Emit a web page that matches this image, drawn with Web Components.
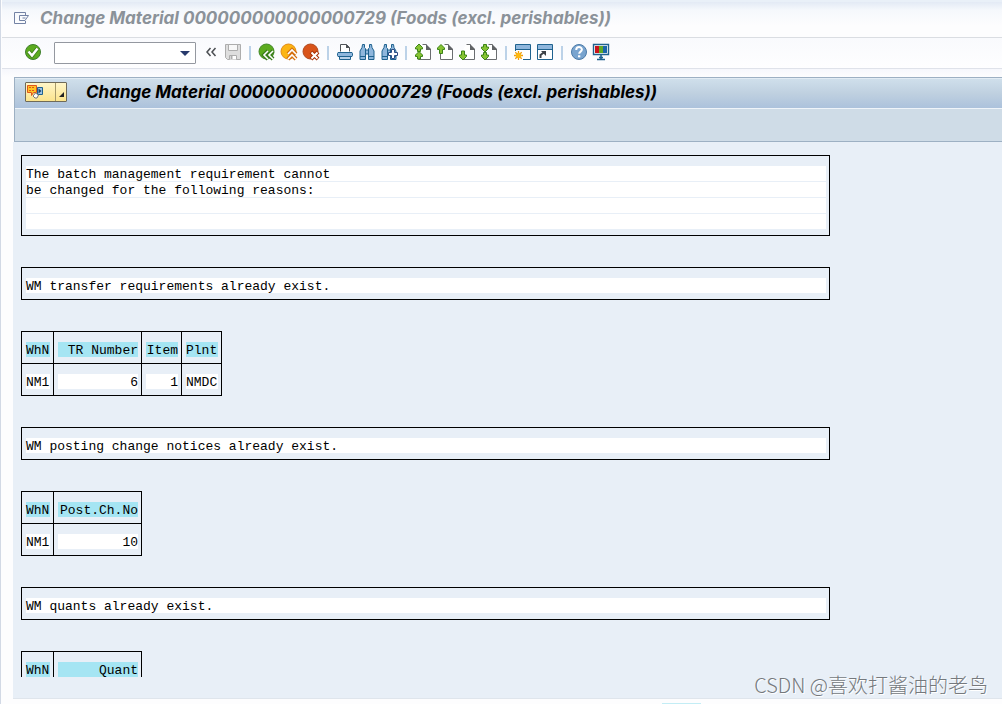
<!DOCTYPE html>
<html lang="en">
<head>
<meta charset="utf-8">
<title>Change Material</title>
<style>
  html, body { margin: 0; height: 100%; background: #fdfdfe; }
  body { overflow: hidden; }
</style>
</head>
<body>
<sap-window>
  <title-bar slot="title">Change Material 000000000000000729 (Foods (excl. perishables))</title-bar>
  <system-toolbar slot="toolbar"></system-toolbar>
  <app-panel>
    <app-header slot="header">Change Material 000000000000000729 (Foods (excl. perishables))</app-header>
    <list-box lines="4">The batch management requirement cannot|be changed for the following reasons:</list-box>
    <list-box lines="1">WM transfer requirements already exist.</list-box>
    <list-table columns="WhN:24:l,TR Number:80:r,Item:32:r,Plnt:32:l" rows="NM1,6,1,NMDC"></list-table>
    <list-box lines="1">WM posting change notices already exist.</list-box>
    <list-table columns="WhN:24:l,Post.Ch.No:80:r" rows="NM1,10"></list-table>
    <list-box lines="1">WM quants already exist.</list-box>
    <list-table columns="WhN:24:l,Quant:80:r" rows=""></list-table>
  </app-panel>
  <water-mark slot="mark">CSDN @喜欢打酱油的老鸟</water-mark>
</sap-window>

<script>
const define = (name, html, setup) => {
  const template = document.createElement('template');
  template.innerHTML = html;
  customElements.define(name, class extends HTMLElement {
    connectedCallback() {
      if (this.shadowRoot) return;
      this.attachShadow({ mode: 'open' }).append(template.content.cloneNode(true));
      if (setup) setup(this, this.shadowRoot);
    }
  });
};

const page = (arrows) => `
  <path d="M8 1.500h4l4.500 4.500v10.500h-12V8z" fill="#fff"/>
  <path d="M8.500 1.500h4M16.500 6v10.500h-12V10" fill="none" stroke="#6a6d70"/>
  <path d="M12 1l5 5v1h-5z" fill="#606366"/>${arrows}`;
const arrow = (d) => `<path d="${d}" fill="#86c332" stroke="#3c8417"/>`;
const chevrons = `stroke-width="1.600" fill="none"`;
const binoculars = `
  <path d="M7 7h4v4H7z" fill="#8fb6dc" stroke="#1f628f"/>
  <path d="M4.500 1.500h2v3l1 1v11h-5.500V8l2-3.500zM13.500 1.500h-2v3l-1 1v11H16V8l-2-3.500z" fill="#8fb6dc" stroke="#1f628f"/>
  <path d="M2 13.500h5.500M10.500 13.500H16" stroke="#1f628f"/>`;
const windowFrame = `
  <path d="M1.500 1.500h15v15h-15z" fill="#fff" stroke="#1f628f"/>
  <path d="M2 2h14v4H2z" fill="#8fb6dc"/><path d="M1 6.500h16" stroke="#1f628f"/>`;

const ICONS = {
  check: `<circle cx="9" cy="9" r="7.500" fill="#5cab1e" stroke="#3f7f2d"/><path d="M4.500 8.500l3.500 4 5.500-7" fill="none" stroke="#3c7a1c" stroke-width="4"/><path d="M4.500 8.500l3.500 4 5.500-7" fill="none" stroke="#fff" stroke-width="2.500"/>`,
  collapse: `<path d="M8.500 5L5 9l3.500 4M13.500 5L10 9l3.500 4" fill="none" stroke="#4b4e52" stroke-width="1.500"/>`,
  save: `<path d="M1.500 1.500h15v15h-13l-2-2z" fill="#dedede" stroke="#adadad"/><path d="M4.500 1.500h9v6h-9z" fill="#f8f8f8" stroke="#adadad"/><path d="M5.500 16.500v-4h7v4" fill="#fff" stroke="#adadad"/><path d="M6.500 13h2v3h-2z" fill="#adadad"/>`,
  back: `<circle cx="8.500" cy="8.500" r="7.500" fill="#5cab1e" stroke="#43882a"/><path d="M10 8l-4 4 4 4M15 8l-4 4 4 4" fill="none" stroke="#397d1c" stroke-width="4"/><path d="M10 8l-4 4 4 4M15 8l-4 4 4 4" stroke="#fff" ${chevrons}/>`,
  up: `<circle cx="8.500" cy="8.500" r="7.500" fill="#fcb514" stroke="#e18a17"/><path d="M8 11l4-4 4 4M8 16l4-4 4 4" fill="none" stroke="#d5700f" stroke-width="4"/><path d="M8 11l4-4 4 4M8 16l4-4 4 4" stroke="#fff" ${chevrons}/>`,
  cancel: `<circle cx="8.500" cy="8.500" r="7.500" fill="#d9541a" stroke="#b04a20"/><path d="M9 9l7 7M16 9l-7 7" stroke="#a93005" stroke-width="4"/><path d="M9.500 9.500l6 6M15.500 9.500l-6 6" stroke="#fff" stroke-width="2"/>`,
  print: `<path d="M4.500 8.500v-7h6l3 3v4" fill="#fff" stroke="#505459"/><path d="M10 1v4h4z" fill="#505459"/><path d="M2 9.500h14l.5 1v2l-.5 1H2l-.5-1v-2z" fill="#8fb6dc" stroke="#1f628f"/><path d="M3.500 14v2.500h11V14" fill="#b8d0e8" stroke="#1f628f"/>`,
  find: binoculars,
  findNext: binoculars + `<path d="M11.500 6.500h3v3h3v3h-3v3h-3v-3h-3v-3h3z" fill="#fff" stroke="#2c4c84"/>`,
  first: page(arrow('M5 1l3.500 3.500V6h-2v2.500h-3V6h-2V4.500zM5 8.500L8.500 12v1.500h-2V16h-3v-2.500h-2V12z')),
  previous: page(arrow('M5 1.500L8.500 5v1.500h-2v4h-3v-4h-2V5z')),
  next: page(arrow('M5 17l3.500-3.500V12h-2V8h-3v4h-2v1.500z')),
  last: page(arrow('M5 9l3.500-3.500V4h-2V1.500h-3V4h-2v1.500zM5 17l3.500-3.500V12h-2V9.500h-3V12h-2v1.500z')),
  session: windowFrame + `<path d="M0 8h9v10H0z" fill="#fff"/><path d="M4.500 8v9M0 12.500h9M1.300 9.300l6.400 6.400M7.700 9.300l-6.400 6.400" stroke="#f09a0c" stroke-width="1.300"/><circle cx="4.500" cy="12.500" r="2.700" fill="#fdb913"/>`,
  shortcut: windowFrame + `<path d="M4.500 15v-3l4-3" stroke="#3f4247" stroke-width="2" fill="none"/><path d="M5 8h5v5z" fill="#3f4247"/>`,
  help: `<circle cx="9" cy="9" r="7.500" fill="#79a4cf" stroke="#4b7aa8"/><path d="M6.200 7c0-4 5.700-3.700 5.700-.4 0 2-2.700 2-2.700 4.200" fill="none" stroke="#fff" stroke-width="2"/><path d="M8 12.300h2.300v2H8z" fill="#fff"/>`,
  layout: `<path d="M1.500 1.500h15v10h-15z" fill="#fff" stroke="#1f628f" stroke-width="1.400"/><path d="M3 3h4v7H3z" fill="#c9141c"/><path d="M7 3h4v7H7z" fill="#62aa28"/><path d="M11 3h4v7h-4z" fill="#1b66a9"/><path d="M9 12v4M5 16.500h8M7 14.500h4" stroke="#1f628f" stroke-width="1.600"/>`
};

define('tool-icon', `
  <style>
    :host { display: block; width: 18px; height: 18px; }
    svg { display: block; }
  </style>`, (el, root) => {
  root.innerHTML += `<svg width="18" height="18" viewBox="0 0 18 18" aria-hidden="true">${ICONS[el.getAttribute('name')]}</svg>`;
});

define('tool-button', `
  <style>
    :host { display: block; flex: none; }
    button { display: flex; align-items: center; justify-content: center; box-sizing: border-box; width: 22px; height: 22px; padding: 0 0 2px; border: 0; background: none; }
  </style>
  <button type="button"></button>`, (el, root) => {
  const button = root.querySelector('button');
  button.setAttribute('aria-label', el.getAttribute('label'));
  button.innerHTML = `<tool-icon name="${el.getAttribute('name')}"></tool-icon>`;
});

define('tool-separator', `
  <style>
    :host { display: flex; justify-content: center; width: 12px; height: 14px; flex: none; }
    i { width: 2px; background: #bcd2e8; }
  </style><i></i>`);

define('sap-window', `
  <style>
    :host { display: flex; flex-direction: column; box-sizing: border-box; height: 100vh; position: relative; overflow: hidden;
      border-left: 1px solid #d2d9e5; padding-left: 1px; background: #fdfdfe; }
    main { flex: 1; min-height: 0; display: flex; flex-direction: column; padding: 8px 0 0 11px; background: linear-gradient(#f6f7fc, #fdfdfe 8px); }
    .strip { height: 2px; background: #e9f0f8; }
    footer { display: flex; align-items: flex-end; height: 5px; padding-left: 66%; }
    footer i { width: 39px; height: 1px; background: #c3edf5; }
    ::slotted(water-mark) { position: absolute; right: 14px; bottom: 5px; }
  </style>
  <div class="strip"></div>
  <slot name="title"></slot>
  <slot name="toolbar"></slot>
  <main><slot></slot></main>
  <footer><i></i></footer>
  <slot name="mark"></slot>`);

define('title-bar', `
  <style>
    :host { display: flex; align-items: center; gap: 10px; height: 36px; padding: 0 0 4px 12px; border-bottom: 1px solid #dadde2;
      background: linear-gradient(#e3eaf5, #f5f8fc 8px, #fdfdfe 24px); box-sizing: border-box; }
    svg { flex: none; }
    h1 { margin: 0; font: italic bold 17px/20px Inter, sans-serif; color: #8b9299; white-space: nowrap; }
  </style>
  <svg width="16" height="14" viewBox="0 0 16 14" aria-hidden="true"><path d="M11.500 4V1.500h-11v11h11V10M5.500 4.500h9l-3.500 5H5.500zM8.500 7h3" fill="none" stroke="#7382a4"/></svg>
  <h1><slot></slot></h1>`);

define('command-field', `
  <style>
    :host { display: flex; flex: none; box-sizing: border-box; width: 142px; height: 22px; margin: 0 4px 0 10px; border: 1px solid #9498a0; border-radius: 1px; background: #fff; }
    input { flex: 1; min-width: 0; border: 0; padding: 0 4px; background: none; outline: 0; font: 13px "Liberation Sans", sans-serif; }
    button { width: 20px; padding: 0; border: 0; background: none; display: flex; align-items: center; justify-content: center; }
  </style>
  <input type="text" aria-label="Command">
  <button type="button" aria-label="Command history"><svg width="10" height="5" viewBox="0 0 10 5"><path d="M0 0h10L5 5z" fill="#273a6c"/></svg></button>`);

define('system-toolbar', `
  <style>
    :host { display: block; border-bottom: 1px solid #dfe2ea; }
    nav { display: flex; align-items: center; height: 30px; padding: 0 20px; background: linear-gradient(#f9fafd, #fefeff); }
  </style>
  <nav aria-label="System toolbar"></nav>`, (el, root) => {
  const items = [['check', 'Enter'], 'field', ['collapse', 'Hide'], ['save', 'Save'], '|',
    ['back', 'Back'], ['up', 'Exit'], ['cancel', 'Cancel'], '|',
    ['print', 'Print'], ['find', 'Find'], ['findNext', 'Find next'], '|',
    ['first', 'First page'], ['previous', 'Previous page'], ['next', 'Next page'], ['last', 'Last page'], '|',
    ['session', 'New session'], ['shortcut', 'Create shortcut'], '|', ['help', 'Help'], ['layout', 'Customize layout']];
  root.querySelector('nav').innerHTML = items.map((item) =>
    item === '|' ? '<tool-separator></tool-separator>' :
    item === 'field' ? '<command-field></command-field>' :
    `<tool-button name="${item[0]}" label="${item[1]}"></tool-button>`).join('');
});

define('app-header', `
  <style>
    :host { display: block; margin-left: 1px; border: 1px solid #9db0c3; border-right: 0; }
    .bar { display: flex; align-items: center; gap: 19px; height: 30px; box-sizing: border-box; padding: 0 10px 4px; background: linear-gradient(#cfdfeb, #bfd0e0 50%, #acc2dc); border-top: 1px solid #e2ecf4; }
    .sub { height: 32px; border-top: 1px solid #eff4f9; background: #cfdce7; }
    .menu { display: flex; flex: none; box-sizing: border-box; width: 42px; height: 20px; border: 1px solid #6f6a58; border-radius: 1px; background: linear-gradient(#fff6c8, #fbe48d); }
    button { padding: 0; border: 0; background: none; display: flex; }
    .main { flex: 1; padding: 1px; }
    .more { width: 11px; border-left: 1px solid #a69a6a; align-items: flex-end; justify-content: center; padding-bottom: 4px; }
    h2 { margin: 0; font: italic bold 17px/20px Inter, sans-serif; color: #000; white-space: nowrap; }
  </style>
  <div class="bar">
    <div class="menu">
      <button class="main" type="button" aria-label="Services for object"><svg width="18" height="16" viewBox="0 0 18 16">
        <path d="M10.500 3.500h5v7h-5z" fill="#9cc2e5" stroke="#1f628f"/><path d="M11.500 4.500l3 2.500-3 2.500z" fill="#17456d"/>
        <path d="M.5 1.500h9v7h-3l-2 3v-3h-4z" fill="#ffc425" stroke="#e0551b"/><path d="M2 3.500h6M2 6.500h5" stroke="#e0551b" stroke-dasharray="2 1"/>
        <path d="M6 12l2.500-3 3 2-1.500 3H8z" fill="#fff" stroke="#777"/></svg></button>
      <button class="more" type="button" aria-label="More services"><svg width="5" height="5" viewBox="0 0 5 5"><path d="M5 0v5H0z" fill="#222"/></svg></button>
    </div>
    <h2><slot></slot></h2>
  </div>
  <div class="sub"></div>`);

define('app-panel', `
  <style>
    :host { display: flex; flex-direction: column; flex: 1; min-height: 0; }
    .body { flex: 1; min-height: 0; display: flex; flex-direction: column; padding: 13px 8px 21px; border-bottom: 1px solid #dfe5ec; background: #e8eff7; }
    .list { flex: 1; min-height: 0; overflow: hidden; display: flex; flex-direction: column; align-items: flex-start; gap: 31px; }
  </style>
  <slot name="header"></slot>
  <div class="body"><div class="list"><slot></slot></div></div>`);

define('list-box', `
  <style>
    :host { display: block; flex: none; box-sizing: border-box; width: 100%; max-width: 809px; border: 1px solid #000; padding: 10px 3px 5px 4px; }
    p { margin: 0; padding-top: 1px; box-sizing: border-box; height: 16px; border-bottom: 1px solid #e8eff7; background: #fff; font: 13px/15px "Liberation Mono", monospace; color: #000; white-space: pre; }
  </style>`, (el, root) => {
  const texts = el.textContent.split('|');
  for (let i = 0; i < Number(el.getAttribute('lines')); i++) {
    const p = document.createElement('p');
    p.textContent = texts[i] || '';
    root.append(p);
  }
});

define('list-table', `
  <style>
    :host { display: block; flex: none; }
    table { border-collapse: separate; border-spacing: 0; border: solid #000; border-width: 0 1px 1px 0; font: 13px/15px "Liberation Mono", monospace; color: #000; }
    th, td { padding: 10px 3px 6px 4px; border: solid #000; border-width: 1px 0 0 1px; font-weight: normal; text-align: left; }
    span { display: block; box-sizing: border-box; height: 15px; padding-top: 1px; background: #fff; white-space: nowrap; }
    th span { background: #a5e5f3; }
    .r { text-align: right; }
  </style>`, (el, root) => {
  const columns = el.getAttribute('columns').split(',').map((c) => c.split(':'));
  const table = document.createElement('table');
  const addRow = (tag, values) => {
    const row = table.insertRow();
    columns.forEach(([, width, align], i) => {
      const cell = document.createElement(tag);
      cell.className = align;
      const span = document.createElement('span');
      span.style.width = width + 'px';
      span.textContent = values[i];
      cell.append(span);
      row.append(cell);
    });
  };
  addRow('th', columns.map((c) => c[0]));
  if (el.getAttribute('rows')) addRow('td', el.getAttribute('rows').split(','));
  root.append(table);
});

define('water-mark', `
  <style>
    :host { display: block; font: 300 20px/28px "Noto Sans CJK SC", sans-serif; color: #75797d; text-shadow: 1px 1px 0 #fff; white-space: nowrap; }
  </style><slot></slot>`);
</script>
</body>
</html>
